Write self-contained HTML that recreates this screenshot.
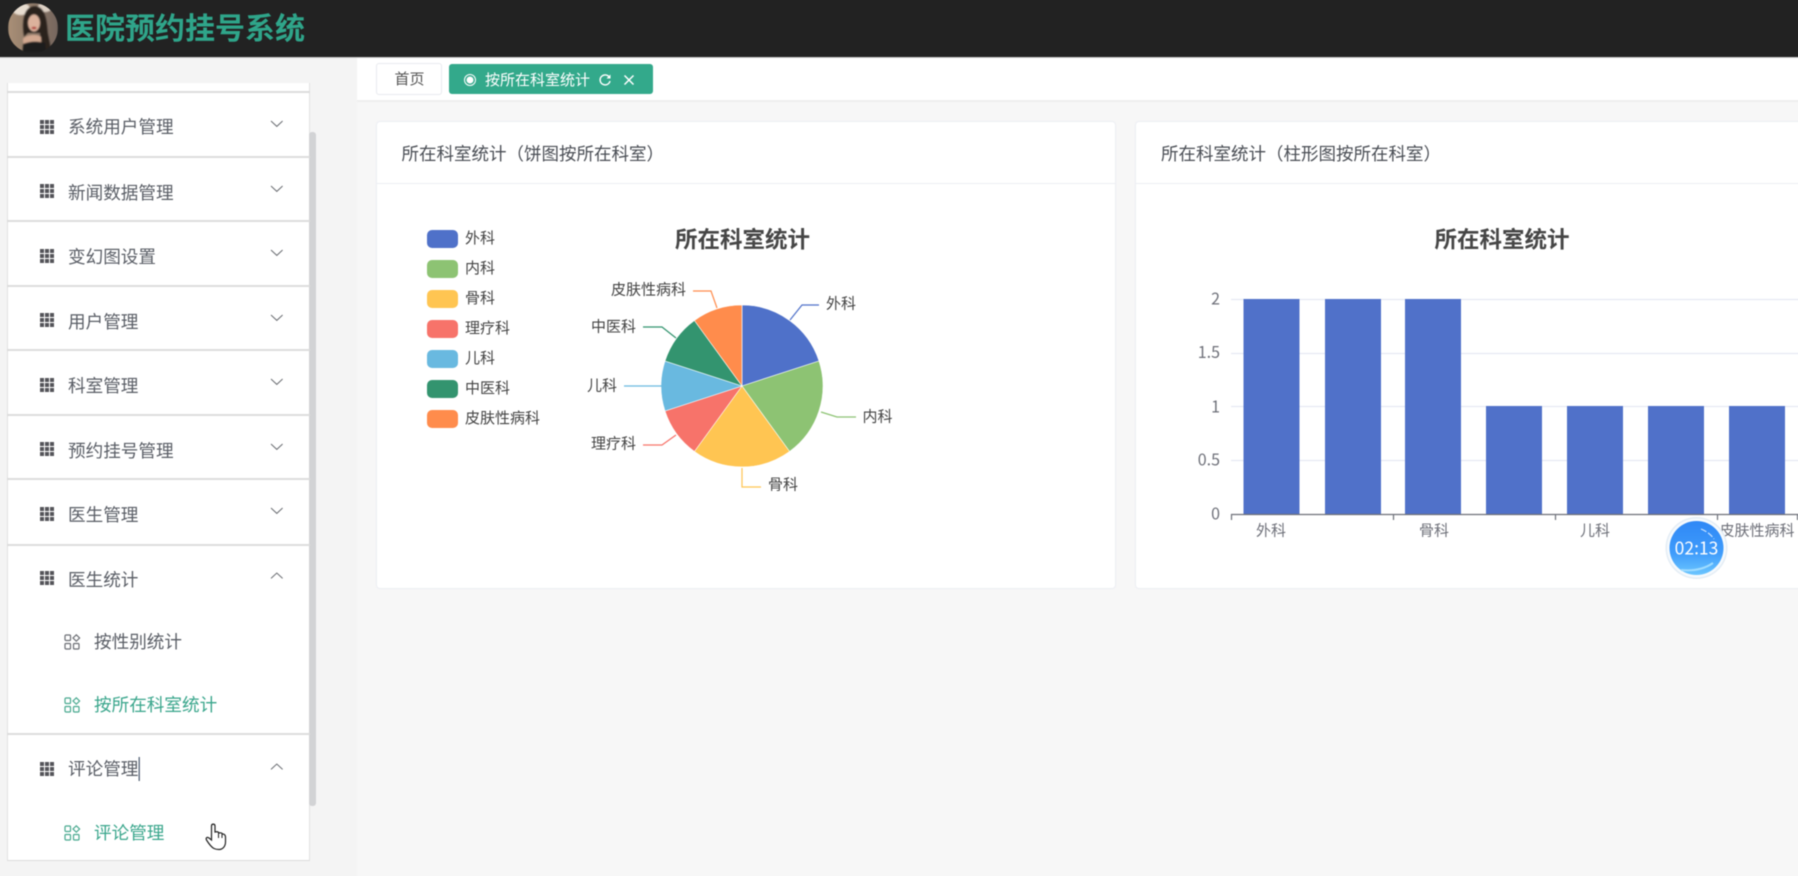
<!DOCTYPE html>
<html lang="zh-CN">
<head>
<meta charset="utf-8">
<title>医院预约挂号系统</title>
<style>
html,body{margin:0;padding:0;width:1798px;height:876px;overflow:hidden;background:#f7f7f7}
body{font-family:"Liberation Sans","Noto Sans CJK SC",sans-serif;position:relative;color:#555}
.abs,.row,.t,.sub,.line{position:absolute}
#wrap{position:absolute;left:0;top:0;width:1798px;height:876px;filter:blur(.4px)}
.t{white-space:nowrap;line-height:24px;height:24px;font-size:17.6px;color:#5a5e66}
.g{color:#3aa68c}
.line{left:7px;width:303px;height:2px;background:#dcdcdc}
svg{position:absolute;overflow:visible}
</style>
</head>
<body>
<div id="wrap">
<!-- header -->
<div class="abs" style="left:-6px;top:-6px;width:1812px;height:63px;background:#222;border-bottom:1px solid #c9c9c9"></div>
<svg style="left:8px;top:3px" width="50" height="50" viewBox="0 0 50 50">
<defs><clipPath id="av"><circle cx="25" cy="25" r="25"/></clipPath>
<linearGradient id="avb" x1="0" x2="1" y1="0" y2="0"><stop offset="0" stop-color="#a98f76"/><stop offset="1" stop-color="#75665e"/></linearGradient>
<filter id="avf"><feGaussianBlur stdDeviation=".7"/></filter></defs>
<g clip-path="url(#av)"><g filter="url(#avf)">
<rect width="50" height="50" fill="url(#avb)"/>
<ellipse cx="13" cy="6" rx="9" ry="6" fill="#e8ddd0"/>
<ellipse cx="37" cy="4" rx="7" ry="5" fill="#ddd0c4"/>
<path d="M16 34 C13 18 16 4 26 3 C38 3 39 18 40 30 L44 50 L33 50 L32 30 L20 30Z" fill="#29211e"/>
<ellipse cx="26" cy="20" rx="6" ry="8.500" fill="#dcb29c"/>
<path d="M16 50 L15 36 C18 31 31 31 33 34 L34 50Z" fill="#d2a890"/>
<path d="M15 41 C22 38 30 38 37 40 L38 50 L14 50Z" fill="#1c1a1a"/>
<ellipse cx="26" cy="25" rx="2.500" ry="1.200" fill="#b0403a"/>
</g></g></svg>
<div class="abs" style="left:65px;top:12px;font-size:30px;line-height:36px;font-weight:700;color:#2fa58a;white-space:nowrap">医院预约挂号系统</div>

<!-- sidebar -->
<div class="abs" style="left:-6px;top:58px;width:363px;height:824px;background:#f4f4f4"></div>
<div class="abs" style="left:7px;top:83px;width:303px;height:778px;background:#fff;border-left:1px solid #e2e2e2;border-right:1px solid #e2e2e2;border-bottom:1px solid #dcdcdc;box-sizing:border-box"></div>
<div class="abs" style="left:309px;top:132px;width:7px;height:674px;background:#d2d3d5;border-radius:3px"></div>
<div class="line" style="top:91px"></div>
<div class="line" style="top:156px"></div>
<div class="line" style="top:220px"></div>
<div class="line" style="top:285px"></div>
<div class="line" style="top:349px"></div>
<div class="line" style="top:414px"></div>
<div class="line" style="top:478px"></div>
<div class="line" style="top:544px"></div>
<div class="line" style="top:733px"></div>

<svg style="left:0;top:0" width="357" height="876">
<defs>
<g id="grid" fill="#55555a">
<rect x="0" y="0" width="4" height="4"/><rect x="5" y="0" width="4" height="4"/><rect x="10" y="0" width="4" height="4"/>
<rect x="0" y="5" width="4" height="4"/><rect x="5" y="5" width="4" height="4"/><rect x="10" y="5" width="4" height="4"/>
<rect x="0" y="10" width="4" height="4"/><rect x="5" y="10" width="4" height="4"/><rect x="10" y="10" width="4" height="4"/>
</g>
<g id="sb" fill="none" stroke-width="1.200">
<rect x="1" y="1" width="5.500" height="5.500" rx="1"/>
<rect x="1" y="9.500" width="5.500" height="5.500" rx="1"/>
<rect x="9.500" y="9.500" width="5.500" height="5.500" rx="1"/>
<path d="M12.300 .8 L15.600 4 L12.300 7.200 L9 4Z"/>
</g>
<polyline id="dn" points="0,0 5.800,5.400 11.600,0" fill="none" stroke="#6a6d72" stroke-width="1"/>
<polyline id="up" points="0,5.400 5.800,0 11.600,5.400" fill="none" stroke="#6a6d72" stroke-width="1"/>
</defs>
<use href="#grid" x="40" y="120"/><use href="#dn" x="271" y="121"/>
<use href="#grid" x="40" y="184"/><use href="#dn" x="271" y="186"/>
<use href="#grid" x="40" y="249"/><use href="#dn" x="271" y="250"/>
<use href="#grid" x="40" y="313"/><use href="#dn" x="271" y="315"/>
<use href="#grid" x="40" y="378"/><use href="#dn" x="271" y="379"/>
<use href="#grid" x="40" y="442"/><use href="#dn" x="271" y="444"/>
<use href="#grid" x="40" y="507"/><use href="#dn" x="271" y="508"/>
<use href="#grid" x="40" y="571"/><use href="#up" x="271" y="573"/>
<use href="#grid" x="40" y="762"/><use href="#up" x="271" y="764"/>
<use href="#sb" x="64" y="634" stroke="#6b6e74"/>
<use href="#sb" x="64" y="697" stroke="#49a98f"/>
<use href="#sb" x="64" y="825" stroke="#49a98f"/>
<rect x="138.600" y="757" width="1.200" height="24" fill="#46566a"/>
<path d="M214 848.500 C211 847 209 844 206.500 840 C205.500 838 207 836.500 209 838 L211.500 840 L211.500 826 C211.500 823.500 215 823.500 215 826 L215 832 C217 831.500 218.500 832 219 833 C220.500 832.600 222 833 222.500 834 C224 833.800 225.500 835 225.500 837 L225.500 842 C225.500 846 223 849.500 219 849.500 C217 849.500 215 849 214 848.500Z" fill="#fff" stroke="#222" stroke-width="1.200"/>
<path d="M218.500 833 V838 M222 834 V838" stroke="#222" stroke-width="1" fill="none"/>
</svg>

<div class="t" style="left:68px;top:115px">系统用户管理</div>
<div class="t" style="left:68px;top:181px">新闻数据管理</div>
<div class="t" style="left:68px;top:245px">变幻图设置</div>
<div class="t" style="left:68px;top:310px">用户管理</div>
<div class="t" style="left:68px;top:374px">科室管理</div>
<div class="t" style="left:68px;top:439px">预约挂号管理</div>
<div class="t" style="left:68px;top:503px">医生管理</div>
<div class="t" style="left:68px;top:568px">医生统计</div>
<div class="t" style="left:94px;top:630px">按性别统计</div>
<div class="t g" style="left:94px;top:693px">按所在科室统计</div>
<div class="t" style="left:68px;top:757px">评论管理</div>
<div class="t g" style="left:94px;top:821px">评论管理</div>

<!-- main -->
<div class="abs" style="left:357px;top:58px;width:1447px;height:42px;background:#fff;border-bottom:2px solid #efefef"></div>
<div class="abs" style="left:376px;top:63px;width:66px;height:32px;box-sizing:border-box;background:#fff;border:1px solid #e8eaef;border-radius:3px;text-align:center;font-size:15px;line-height:32px;color:#555;padding-left:1px">首页</div>
<div class="abs" style="left:449px;top:64px;width:204px;height:30px;background:#33a98b;border-radius:3px"></div>
<div class="abs" style="left:485px;top:68.500px;font-size:15px;line-height:24px;color:#fff;white-space:nowrap">按所在科室统计</div>
<svg style="left:449px;top:64px" width="204" height="30" viewBox="449 64 204 30">
<circle cx="470" cy="80" r="5.500" fill="none" stroke="#fff" stroke-width="1"/>
<circle cx="470" cy="80" r="3.500" fill="#fff"/>
<path d="M609.500 77.500 A5 5 0 1 0 610 81" fill="none" stroke="#fff" stroke-width="1.400"/>
<path d="M610.500 74.500 V78.500 H606.500Z" fill="#fff"/>
<path d="M624.500 75.500 L633.500 84.500 M633.500 75.500 L624.500 84.500" stroke="#fff" stroke-width="1.500"/>
</svg>

<!-- cards -->
<div class="abs" style="left:376px;top:121px;width:740px;height:468px;box-sizing:border-box;background:#fff;border:1px solid #eceef3;border-radius:4px"></div>
<div class="abs" style="left:376px;top:183px;width:740px;height:1px;background:#eceef3"></div>
<div class="abs" style="left:401.500px;top:141px;font-size:17.500px;line-height:26px;color:#4a4e55;white-space:nowrap">所在科室统计（饼图按所在科室）</div>
<div class="abs" style="left:1135px;top:121px;width:680px;height:468px;box-sizing:border-box;background:#fff;border:1px solid #eceef3;border-radius:4px"></div>
<div class="abs" style="left:1135px;top:183px;width:675px;height:1px;background:#eceef3"></div>
<div class="abs" style="left:1161px;top:141px;font-size:17.500px;line-height:26px;color:#4a4e55;white-space:nowrap">所在科室统计（柱形图按所在科室）</div>

<svg style="left:0;top:0" width="1798" height="876" font-size="15" font-family="'Liberation Sans','Noto Sans CJK SC',sans-serif">
<!-- pie title -->
<text x="742.500" y="240" text-anchor="middle" dominant-baseline="central" font-size="22.500" font-weight="700" fill="#464646">所在科室统计</text>
<!-- legend -->
<g>
<rect x="427" y="230" width="31" height="18" rx="5" fill="#4f71c9"/>
<rect x="427" y="260" width="31" height="18" rx="5" fill="#8dc373"/>
<rect x="427" y="290" width="31" height="18" rx="5" fill="#ffc552"/>
<rect x="427" y="320" width="31" height="18" rx="5" fill="#f7736a"/>
<rect x="427" y="350" width="31" height="18" rx="5" fill="#69b9e0"/>
<rect x="427" y="380" width="31" height="18" rx="5" fill="#33946f"/>
<rect x="427" y="410" width="31" height="18" rx="5" fill="#ff8c4c"/>
</g>
<g fill="#444" dominant-baseline="central">
<text x="465" y="238.500">外科</text>
<text x="465" y="268.500">内科</text>
<text x="465" y="298.500">骨科</text>
<text x="465" y="328.500">理疗科</text>
<text x="465" y="358.500">儿科</text>
<text x="465" y="388.500">中医科</text>
<text x="465" y="418.500">皮肤性病科</text>
</g>
<!-- pie -->
<g stroke="#fff" stroke-width=".6">
<path d="M742 386 L742 305 A81 81 0 0 1 819 361Z" fill="#4f71c9"/>
<path d="M742 386 L819 361 A81 81 0 0 1 789.600 451.500Z" fill="#8dc373"/>
<path d="M742 386 L789.600 451.500 A81 81 0 0 1 694.400 451.500Z" fill="#ffc552"/>
<path d="M742 386 L694.400 451.500 A81 81 0 0 1 665 411Z" fill="#f7736a"/>
<path d="M742 386 L665 411 A81 81 0 0 1 665 361Z" fill="#69b9e0"/>
<path d="M742 386 L665 361 A81 81 0 0 1 694.400 320.500Z" fill="#33946f"/>
<path d="M742 386 L694.400 320.500 A81 81 0 0 1 742 305Z" fill="#ff8c4c"/>
</g>
<g fill="none" stroke-width="1.200">
<polyline points="790,320 802,305 819,305" stroke="#4f71c9"/>
<polyline points="821,412 837,417 856,417" stroke="#8dc373"/>
<polyline points="742,468 742,487 761,487" stroke="#ffc552"/>
<polyline points="676,435 662,445 643,445" stroke="#f7736a"/>
<polyline points="662,386 624,386" stroke="#69b9e0"/>
<polyline points="676,338 662,327 643,327" stroke="#33946f"/>
<polyline points="717,308 711,291 693,291" stroke="#ff8c4c"/>
</g>
<g fill="#444" dominant-baseline="central">
<text x="826" y="304">外科</text>
<text x="862.500" y="417">内科</text>
<text x="768" y="485">骨科</text>
<text x="636" y="444" text-anchor="end">理疗科</text>
<text x="617" y="386" text-anchor="end">儿科</text>
<text x="636" y="327" text-anchor="end">中医科</text>
<text x="686" y="290" text-anchor="end">皮肤性病科</text>
</g>

<!-- bar -->
<text x="1502" y="240" text-anchor="middle" dominant-baseline="central" font-size="22.500" font-weight="700" fill="#464646">所在科室统计</text>
<g stroke="#e6e9f3" stroke-width="1.200">
<line x1="1231" x2="1804" y1="299.500" y2="299.500"/>
<line x1="1231" x2="1804" y1="353.500" y2="353.500"/>
<line x1="1231" x2="1804" y1="406.500" y2="406.500"/>
<line x1="1231" x2="1804" y1="460.500" y2="460.500"/>
</g>
<g fill="#5071c9">
<rect x="1243.500" y="299" width="56" height="215"/>
<rect x="1325" y="299" width="56" height="215"/>
<rect x="1405" y="299" width="56" height="215"/>
<rect x="1486" y="406" width="56" height="108"/>
<rect x="1567" y="406" width="56" height="108"/>
<rect x="1648" y="406" width="56" height="108"/>
<rect x="1729" y="406" width="56" height="108"/>
</g>
<path d="M1231 514.500 H1804 M1231.500 514 V520 M1393.500 514 V520 M1555.500 514 V520 M1717.500 514 V520 M1797.500 514 V520" stroke="#6e7079" stroke-width="1.200" fill="none"/>
<g fill="#6e7079" font-size="16" font-family="'Noto Sans CJK SC',sans-serif" text-anchor="end" dominant-baseline="central">
<text x="1220" y="297.500">2</text>
<text x="1220" y="351">1.5</text>
<text x="1220" y="405.500">1</text>
<text x="1220" y="458.500">0.5</text>
<text x="1220" y="512.500">0</text>
</g>
<g fill="#6e7079" font-size="15" text-anchor="middle" dominant-baseline="central">
<text x="1271" y="531">外科</text>
<text x="1434" y="531">骨科</text>
<text x="1595" y="531">儿科</text>
<text x="1757" y="531">皮肤性病科</text>
</g>
<!-- timer -->
<defs>
<linearGradient id="tm" x1="0" x2="0" y1="0" y2="1"><stop offset="0" stop-color="#2f88f6"/><stop offset=".6" stop-color="#3f9cfb"/><stop offset="1" stop-color="#6cc6ff"/></linearGradient>
</defs>
<circle cx="1696.500" cy="548" r="31" fill="#e4edf5"/>
<circle cx="1696.500" cy="548" r="29.500" fill="#f6fafd"/>
<circle cx="1696.500" cy="548" r="27" fill="url(#tm)"/>
<path d="M1701 529 Q1709 532 1714 539" fill="none" stroke="#cfe6ff" stroke-width="1.200" stroke-dasharray="6 2"/>
<path d="M1681 570 Q1700 572 1713 563" fill="none" stroke="#9fdcff" stroke-width="2"/>
<text x="1696.500" y="548" fill="#fff" font-size="17.500" font-family="'Noto Sans CJK SC',sans-serif" text-anchor="middle" dominant-baseline="central">02:13</text>
</svg>
</div>
</body>
</html>
